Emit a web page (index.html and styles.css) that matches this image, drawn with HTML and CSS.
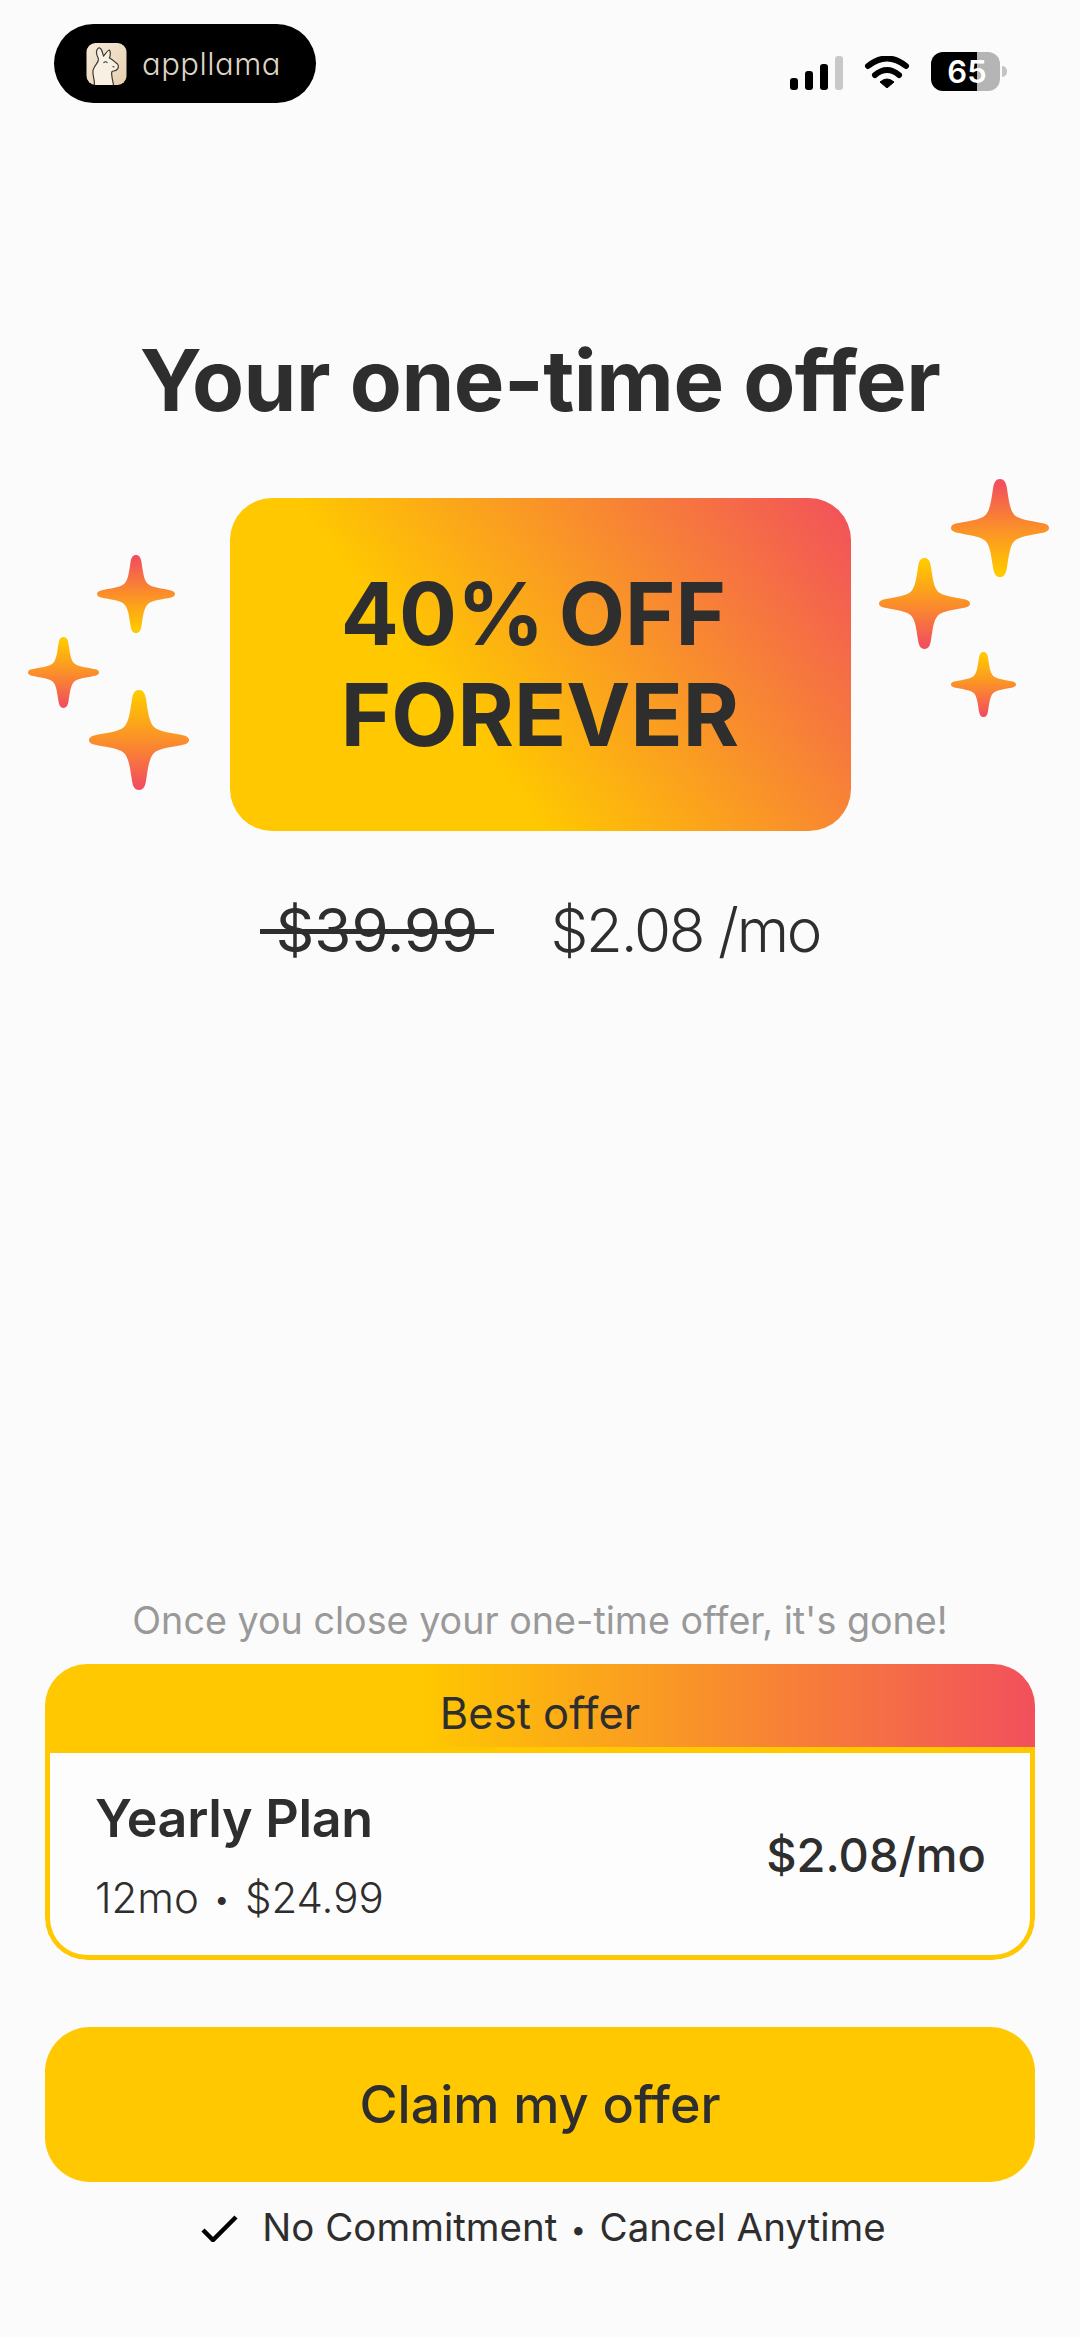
FILE: index.html
```html
<!DOCTYPE html>
<html lang="en">
<head>
<meta charset="utf-8">
<title>Your one-time offer</title>
<link rel="stylesheet" href="styles.css">
</head>
<body>
<svg class="defs" width="0" height="0" aria-hidden="true">
  <defs>
    <linearGradient id="spark-down" x1="0" y1="0" x2="0" y2="1">
      <stop offset="0.05" stop-color="#FFC800"/>
      <stop offset="0.5" stop-color="#FB8F2A"/>
      <stop offset="0.95" stop-color="#F2505C"/>
    </linearGradient>
    <linearGradient id="spark-up" x1="0" y1="1" x2="0" y2="0">
      <stop offset="0.05" stop-color="#FFC800"/>
      <stop offset="0.5" stop-color="#FB8F2A"/>
      <stop offset="0.95" stop-color="#F2505C"/>
    </linearGradient>
    <path id="spark" d="M50 0C54 0 56 3 57 9C59 22 60 32 65 37C70 42 84 43 95 45.500C98.500 46.500 100 48 100 50C100 52 98.500 53.500 95 54.500C84 57 70 58 65 63C60 68 59 78 57 91C56 97 54 100 50 100C46 100 44 97 43 91C41 78 40 68 35 63C30 58 16 57 5 54.500C1.500 53.500 0 52 0 50C0 48 1.500 46.500 5 45.500C16 43 30 42 35 37C40 32 41 22 43 9C44 3 46 0 50 0Z"/>
  </defs>
</svg>
<div class="screen">
  <header class="status">
    <div class="brand">
      <svg class="brand-icon" viewBox="0 0 40 42">
        <defs>
          <linearGradient id="icon-bg" x1="0" y1="0" x2="1" y2="1">
            <stop offset="0" stop-color="#f6ead9"/>
            <stop offset="1" stop-color="#e6cfae"/>
          </linearGradient>
        </defs>
        <rect width="40" height="42" rx="9" fill="url(#icon-bg)"/>
        <path d="M8 42C8 34 5 30 7 26C9 21 12 20 12 16C10 12 9 7 12 5C15 4 16 10 17 13C19 11 21 7 23 7C24 9 24 12 23 15C27 17 28 19 31 21C33 24 31 28 27 28C24 28 25 32 27 42" fill="#f8f0e3" stroke="#3c3833" stroke-width="1.2"/>
        <path d="M17 20Q19 17.500 21 20M26 23.500L28 24" fill="none" stroke="#3c3833" stroke-width="1.100"/>
      </svg>
      <span class="brand-name">appllama</span>
    </div>
    <div class="indicators">
      <div class="signal">
        <span class="bar bar-1"></span>
        <span class="bar bar-2"></span>
        <span class="bar bar-3"></span>
        <span class="bar bar-4"></span>
      </div>
      <svg class="wifi" viewBox="0 0 46 32">
        <path d="M4 10Q23 -5 42 10M11 19Q23 9 35 19" fill="none" stroke="#000" stroke-width="6" stroke-linecap="round"/>
        <path d="M16 26Q23 20 30 26L23 32Z" fill="#000" stroke="#000" stroke-linejoin="round"/>
      </svg>
      <div class="battery">
        <div class="battery-body"><span class="battery-level">65</span></div>
        <span class="battery-nub"></span>
      </div>
    </div>
  </header>

  <h1 class="title">Your one-time offer</h1>

  <section class="hero">
    <svg class="sparkle spark-a" viewBox="0 0 100 100"><use href="#spark" fill="url(#spark-up)"/></svg>
    <svg class="sparkle spark-b" viewBox="0 0 100 100"><use href="#spark" fill="url(#spark-down)"/></svg>
    <svg class="sparkle spark-c" viewBox="0 0 100 100"><use href="#spark" fill="url(#spark-down)"/></svg>
    <svg class="sparkle spark-d" viewBox="0 0 100 100"><use href="#spark" fill="url(#spark-up)"/></svg>
    <svg class="sparkle spark-e" viewBox="0 0 100 100"><use href="#spark" fill="url(#spark-down)"/></svg>
    <svg class="sparkle spark-f" viewBox="0 0 100 100"><use href="#spark" fill="url(#spark-down)"/></svg>
    <div class="badge"><p class="badge-text">40% OFF<br>FOREVER</p></div>
  </section>

  <div class="prices">
    <span class="old-price">$39.99</span>
    <span class="new-price">$2.08 /mo</span>
  </div>

  <section class="purchase">
    <p class="hint">Once you close your one-time offer, it's gone!</p>
    <div class="plan">
      <div class="plan-tag">Best offer</div>
      <div class="plan-body">
        <div class="plan-info">
          <div class="plan-name">Yearly Plan</div>
          <div class="plan-meta">12mo <span class="dot">•</span> $24.99</div>
        </div>
        <div class="plan-price">$2.08/mo</div>
      </div>
    </div>
    <button class="cta" type="button">Claim my offer</button>
    <div class="assure">
      <svg class="check" viewBox="0 0 37 27"><path d="M2 15L12 25L35 2" fill="none" stroke="#000" stroke-width="4.500"/></svg>
      <span>No Commitment <span class="dot">•</span> Cancel Anytime</span>
    </div>
  </section>
</div>
</body>
</html>
```
FILE: styles.css
```css
* { box-sizing: border-box; }
html, body { margin: 0; padding: 0; }
body {
  background: #fbfbfb;
  color: #2e2e2e;
  font-family: Inter, "Liberation Sans", sans-serif;
}
.defs { position: absolute; }
.screen {
  width: 1080px;
  height: 2337px;
  display: flex;
  flex-direction: column;
  overflow: hidden;
}

/* status bar */
.status {
  display: flex;
  justify-content: space-between;
  align-items: flex-start;
  padding: 24px 73px 0 54px;
}
.brand {
  width: 262px;
  height: 79px;
  background: #000;
  border-radius: 40px;
  display: flex;
  align-items: center;
  gap: 15px;
  padding-left: 32px;
}
.brand-icon { width: 41px; height: 42px; flex: none; }
.brand-name {
  font-size: 31px;
  font-weight: 300;
  color: #dfd4c4;
  font-feature-settings: "cv11" 1;
  letter-spacing: 0.5px;
  line-height: 1;
}
.indicators {
  display: flex;
  align-items: flex-end;
  gap: 21px;
  padding-top: 28px;
}
.signal { display: flex; align-items: flex-end; gap: 7px; height: 36px; }
.bar { width: 8px; background: #000; border-radius: 3px; display: block; }
.bar-1 { height: 12px; }
.bar-2 { height: 19px; }
.bar-3 { height: 26px; }
.bar-4 { height: 34px; background: #c8c8c8; }
.wifi { width: 46px; height: 32px; margin-bottom: 2px; }
.battery { display: flex; align-items: center; gap: 2px; margin-bottom: -1px; }
.battery-body {
  width: 69px;
  height: 39px;
  border-radius: 12px;
  background: linear-gradient(90deg, #000 67%, #b5b5b5 67%);
  display: flex;
  align-items: center;
  justify-content: center;
  padding-left: 3px;
}
.battery-level { color: #fff; font-size: 31px; font-weight: 600; line-height: 1; }
.battery-nub {
  width: 5px;
  height: 11px;
  background: #c4c4c4;
  border-radius: 0 6px 6px 0;
}

/* heading */
.title {
  margin: 228px 0 0;
  text-align: center;
  font-size: 85px;
  line-height: 100px;
  font-weight: 700;
  letter-spacing: -0.5px;
  color: #2e2e2e;
}

/* hero */
.hero {
  position: relative;
  margin-top: 67px;
  height: 333px;
  display: flex;
  justify-content: center;
}
.badge {
  width: 621px;
  height: 333px;
  border-radius: 42px;
  background: linear-gradient(53deg, #FFC800 36%, #F2505C 100%);
  display: flex;
  align-items: center;
  justify-content: center;
}
.badge-text {
  margin: 0;
  font-size: 86px;
  line-height: 101px;
  font-weight: 700;
  text-align: left;
  word-spacing: -6px;
  color: #2e2e2e;
}
.sparkle { position: absolute; display: block; }
.spark-a { left: 97px;  top: 57px;  width: 78px;  height: 78px; }
.spark-b { left: 28px;  top: 139px; width: 71px;  height: 71px; }
.spark-c { left: 89px;  top: 192px; width: 100px; height: 100px; }
.spark-d { left: 951px; top: -19px; width: 98px;  height: 98px; }
.spark-e { left: 879px; top: 60px;  width: 91px;  height: 91px; }
.spark-f { left: 951px; top: 154px; width: 65px;  height: 65px; }

/* prices */
.prices {
  display: flex;
  justify-content: center;
  align-items: baseline;
  gap: 56px;
  margin-top: 63px;
  font-size: 60px;
  line-height: 72px;
}
.old-price {
  position: relative;
  font-weight: 400;
  padding: 0 16px;
}
.old-price::after {
  content: "";
  position: absolute;
  left: 0;
  right: 0;
  top: 35px;
  height: 5px;
  background: #2e2e2e;
}
.new-price { font-weight: 300; letter-spacing: -2.2px; }

/* purchase */
.purchase {
  margin-top: auto;
  padding: 0 45px 84px;
  display: flex;
  flex-direction: column;
  align-items: stretch;
}
.hint {
  margin: 0 0 21px;
  text-align: center;
  color: #999;
  font-size: 37.7px;
  line-height: 46px;
}
.dot { font-size: 0.7em; vertical-align: 0.08em; padding: 0 0.1em; }
.plan { border-radius: 42px; overflow: hidden; }
.plan-tag {
  height: 83px;
  display: flex;
  align-items: center;
  justify-content: center;
  font-size: 43.5px;
  font-weight: 400;
  padding-top: 14px;
  background: linear-gradient(90deg, #FFC800 38%, #F2505C 100%);
}
.plan-body {
  height: 213px;
  border: 5px solid #FFC800;
  border-top-width: 6px;
  border-radius: 0 0 42px 42px;
  background: #fdfdfd;
  display: flex;
  align-items: center;
  justify-content: space-between;
  padding: 0 44px 0 45px;
}
.plan-info { padding-top: 6px; }
.plan-name { font-size: 52px; font-weight: 600; line-height: 60px; letter-spacing: -0.3px; }
.plan-meta { font-size: 42px; font-weight: 300; line-height: 50px; margin-top: 24px; }
.plan-price { font-size: 47px; font-weight: 500; }
.cta {
  margin-top: 67px;
  height: 155px;
  border: 0;
  border-radius: 45px;
  background: #FFC800;
  color: #2e2e2e;
  font: 500 52px Inter, "Liberation Sans", sans-serif;
}
.assure {
  margin-top: 22px;
  display: flex;
  align-items: center;
  justify-content: center;
  gap: 24px;
  font-size: 38.5px;
  line-height: 46px;
  padding-left: 7px;
}
.check { width: 37px; height: 27px; flex: none; }
```
